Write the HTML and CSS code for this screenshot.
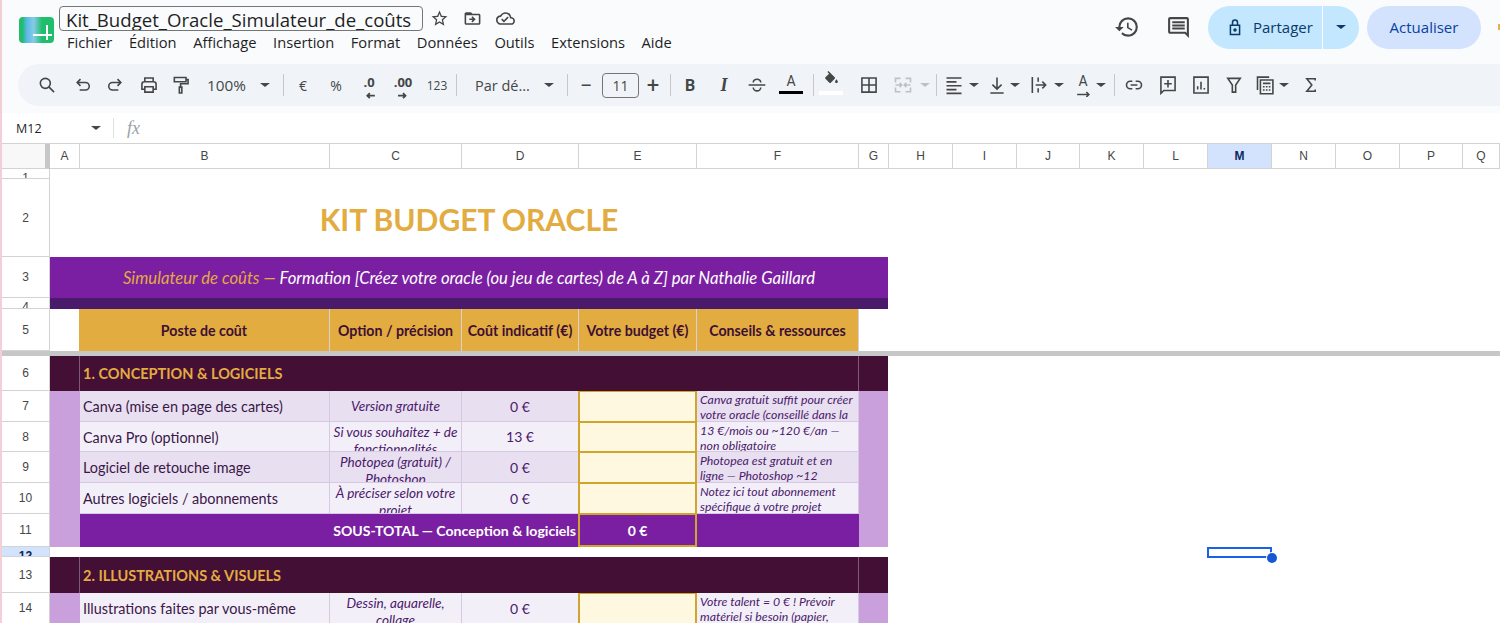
FILE: index.html
```html
<!DOCTYPE html>
<html lang="fr">
<head>
<meta charset="utf-8">
<title>Kit_Budget_Oracle_Simulateur_de_coûts</title>
<link rel="stylesheet" href="styles.css">
</head>
<body>
<header class="top">
  <div class="logo"><i class="logo-h"></i><i class="logo-v"></i></div>
  <div class="doc">
    <div class="title-row">
      <div class="title">Kit_Budget_Oracle_Simulateur_de_coûts</div>
      <svg class="ti" viewBox="0 0 24 24"><path d="M22 9.24l-7.19-.62L12 2 9.19 8.63 2 9.24l5.46 4.73L5.82 21 12 17.27 18.18 21l-1.63-7.03L22 9.24zM12 15.4l-3.76 2.27 1-4.28-3.32-2.88 4.38-.38L12 6.1l1.71 4.04 4.38.38-3.32 2.88 1 4.28L12 15.4z"/></svg>
      <svg class="ti" viewBox="0 0 24 24"><path d="M20 6h-8l-2-2H4c-1.1 0-1.99.9-1.99 2L2 18c0 1.1.9 2 2 2h16c1.1 0 2-.9 2-2V8c0-1.1-.9-2-2-2zm0 12H4V8h16v10zm-8.01-9l-1.41 1.41L12.16 12H8v2h4.16l-1.59 1.59L11.99 17 16 13.01 11.99 9z"/></svg>
      <svg class="ti" viewBox="0 0 24 24"><path d="M19.35 10.04A7.49 7.49 0 0 0 12 4C9.11 4 6.6 5.64 5.35 8.04A5.994 5.994 0 0 0 0 14c0 3.31 2.69 6 6 6h13c2.76 0 5-2.24 5-5 0-2.64-2.05-4.78-4.65-4.96zM19 18H6c-2.21 0-4-1.79-4-4 0-2.05 1.53-3.76 3.56-3.97l1.07-.11.5-.95A5.469 5.469 0 0 1 12 6c2.62 0 4.88 1.86 5.39 4.43l.3 1.5 1.53.11A2.98 2.98 0 0 1 22 15c0 1.65-1.35 3-3 3zm-9-3.82l-2.09-2.09L6.5 13.5 10 17l6.01-6.01-1.41-1.41z"/></svg>
    </div>
    <nav class="menu">
      <span>Fichier</span><span>Édition</span><span>Affichage</span><span>Insertion</span><span>Format</span><span>Données</span><span>Outils</span><span>Extensions</span><span>Aide</span>
    </nav>
  </div>
  <div class="actions">
    <svg class="big" viewBox="0 0 24 24"><path d="M13 3a9 9 0 0 0-9 9H1l3.89 3.89.07.14L9 12H6c0-3.87 3.13-7 7-7s7 3.13 7 7-3.13 7-7 7c-1.93 0-3.68-.79-4.94-2.06l-1.42 1.42A8.954 8.954 0 0 0 13 21a9 9 0 0 0 0-18zm-1 5v5l4.28 2.54.72-1.21-3.5-2.08V8H12z"/></svg>
    <svg class="big cm" viewBox="0 0 24 24"><path d="M21.99 4c0-1.1-.89-2-1.99-2H4c-1.1 0-2 .9-2 2v12c0 1.1.9 2 2 2h14l4 4-.01-18zM20 4v13.17L18.83 16H4V4h16zM6 12h12v2H6zm0-3h12v2H6zm0-3h12v2H6z"/></svg>
    <div class="share">
      <div class="share-main">
        <svg class="lock" viewBox="0 0 24 24"><path d="M6.5 10h11v11h-11z M9 10V6.5a3 3 0 0 1 6 0V10"/><circle cx="12" cy="15.5" r="1.2"/></svg>
        <span>Partager</span>
      </div>
      <div class="share-more"><i class="caret navy"></i></div>
    </div>
    <div class="update">Actualiser</div>
    <i class="avatar"></i>
  </div>
</header>

<div class="toolbar">
  <div class="t m17"><svg viewBox="0 0 24 24"><circle class="s" cx="10" cy="10" r="6"/><path class="s" d="M14.5 14.5 20.5 20.5"/></svg></div>
  <div class="t m12"><svg viewBox="0 0 24 24"><path class="s" d="M9 5 5 9l4 4M5 9h10a4.5 4.5 0 0 1 0 9H8"/></svg></div>
  <div class="t m8"><svg viewBox="0 0 24 24"><path class="s" d="M15 5l4 4-4 4M19 9H9a4.5 4.5 0 0 0 0 9h7"/></svg></div>
  <div class="t m10"><svg viewBox="0 0 24 24"><path class="s" d="M7 8V3.5h10V8M7 17H3.500v-6a3 3 0 0 1 3-3h11a3 3 0 0 1 3 3v6H17M7 14h10v6.500H7z"/></svg></div>
  <div class="t m8"><svg viewBox="0 0 24 24"><path class="s" d="M4 3h14v5H4zM18 5.500h2.500v5H11.500v4M10 14.500h3v7h-3z"/></svg></div>
  <div class="tt zoomv m14">100%</div>
  <i class="caret m11"></i>
  <i class="sep m13"></i>
  <div class="t txt m7">€</div>
  <div class="t txt m9">%</div>
  <div class="t dec m9"><span>.0</span><svg viewBox="0 0 24 24"><path class="s" d="M19 20H10M13 17l-3 3 3 3"/></svg></div>
  <div class="t dec m10"><span>.00</span><svg viewBox="0 0 24 24"><path class="s" d="M6 20h9M12 17l3 3-3 3"/></svg></div>
  <div class="t num m10">123</div>
  <i class="sep m7"></i>
  <div class="tt fontn m18">Par dé...</div>
  <i class="caret m13"></i>
  <i class="sep m13"></i>
  <div class="t pm m6">−</div>
  <div class="size m4">11</div>
  <div class="t pm m2">+</div>
  <i class="sep m5"></i>
  <div class="t bold m7">B</div>
  <div class="t ital m10">I</div>
  <div class="t m9"><svg viewBox="0 0 24 24"><path class="s" d="M2 12h20M7.500 9a4.500 4 0 0 1 9 0M7.500 15a4.500 4 0 0 0 9 0"/></svg></div>
  <div class="t colr m10"><span>A</span><i class="bar black"></i></div>
  <i class="sep m10"></i>
  <div class="t colr m5"><svg class="bucket" viewBox="0 0 24 24"><path d="M16.560 8.940 7.620 0 6.210 1.410l2.380 2.380-5.150 5.150a1.490 1.490 0 0 0 0 2.120l5.500 5.500c.29.29.68.44 1.060.44s.77-.15 1.060-.44l5.500-5.500c.59-.58.59-1.530 0-2.120zM19 11.500s-2 2.170-2 3.500c0 1.100.9 2 2 2s2-.9 2-2c0-1.330-2-3.500-2-3.500z"/></svg><i class="bar white"></i></div>
  <div class="t m14"><svg viewBox="0 0 24 24"><path class="s" d="M3.500 3.500h17v17h-17zM12 3.500v17M3.500 12h17"/></svg></div>
  <div class="t off m10"><svg viewBox="0 0 24 24"><path class="s" d="M3 9V4h6M15 4h6v5M3 15v5h6M15 20h6v-5M3 12h7M8 9.500l2.500 2.500L8 14.500M21 12h-7M16 9.500 13.500 12l2.500 2.500"/></svg></div>
  <i class="caret pale m5"></i>
  <i class="sep m6"></i>
  <div class="t m5"><svg viewBox="0 0 24 24"><path class="s" d="M3 3.500h18M3 8.200h12M3 12.800h18M3 17.500h12M3 22h18"/></svg></div>
  <i class="caret m3"></i>
  <div class="t m6"><svg viewBox="0 0 24 24"><path class="s" d="M12 3v14M6.500 11.500 12 17l5.500-5.500M4 21.500h16"/></svg></div>
  <i class="caret m1"></i>
  <div class="t m7"><svg viewBox="0 0 24 24"><path class="s" d="M4 2.500v19M11 3v5M11 16v5M8 12h12M16 8l4 4-4 4"/></svg></div>
  <i class="caret m3"></i>
  <div class="t rot m7"><span>A</span><svg viewBox="0 0 24 24"><path class="s" d="M5 21h14M16 18l3 3-3 3"/></svg></div>
  <i class="caret m1"></i>
  <i class="sep m8"></i>
  <div class="t m7"><svg viewBox="0 0 24 24"><path class="s" d="M10 7.500H7.500a4.500 4.500 0 0 0 0 9H10M14 7.500h2.500a4.500 4.500 0 0 1 0 9H14M8 12h8"/></svg></div>
  <div class="t m10"><svg viewBox="0 0 24 24"><path class="s" d="M3.500 2.500h17v16H7L3.500 22zM12 6v9M7.500 10.500h9"/></svg></div>
  <div class="t m9"><svg viewBox="0 0 24 24"><path class="s" d="M3.500 2.500h17v19h-17zM8 17.500v-4M12 17.500V8M16 17.500v-2"/></svg></div>
  <div class="t m9"><svg viewBox="0 0 24 24"><path class="s" d="M4.500 4h15l-5.500 8v8.500h-4V12z"/></svg></div>
  <div class="t m7"><svg viewBox="0 0 24 24"><path class="s" d="M3 18V2.500h14M6.500 6h15v16.500h-15zM9.500 10h9M9.500 14h2M13 14h2M16.500 14h2M9.500 18h2M13 18h2M16.500 18h2"/></svg></div>
  <i class="caret m2"></i>
  <div class="t m10"><svg viewBox="0 0 24 24"><path class="s" d="M17 6.500V4.500H7l6 7.500-6 7.500h10v-2"/></svg></div>
</div>

<div class="fbar">
  <div class="namebox">M12</div>
  <i class="caret"></i>
  <i class="fsep"></i>
  <div class="fx">fx</div>
</div>

<main class="sheet">
  <div class="corner"></div>
  <div class="ch">A</div><div class="ch">B</div><div class="ch">C</div><div class="ch">D</div><div class="ch">E</div><div class="ch">F</div><div class="ch">G</div><div class="ch">H</div><div class="ch">I</div><div class="ch">J</div><div class="ch">K</div><div class="ch">L</div><div class="ch on">M</div><div class="ch">N</div><div class="ch">O</div><div class="ch">P</div><div class="ch">Q</div>

  <div class="rh tiny">1</div>

  <div class="rh">2</div>
  <h1 class="wide bigtitle">KIT BUDGET ORACLE</h1>

  <div class="rh">3</div>
  <div class="wide subtitle"><span class="gold">Simulateur de coûts — </span>Formation [Créez votre oracle (ou jeu de cartes) de A à Z] par Nathalie Gaillard</div>

  <div class="rh tiny">4</div>
  <div class="wide strip"></div>

  <div class="rh">5</div>
  <div class="blank"></div>
  <div class="th">Poste de coût</div>
  <div class="th">Option / précision</div>
  <div class="th">Coût indicatif (€)</div>
  <div class="th">Votre budget (€)</div>
  <div class="th">Conseils &amp; ressources</div>
  <div class="blank"></div>

  <div class="freeze"></div>

  <div class="rh">6</div>
  <div class="band"></div>
  <div class="section">1. CONCEPTION &amp; LOGICIELS</div>
  <div class="band last"></div>

  <div class="rh">7</div>
  <div class="side five"></div>
  <div class="name alt">Canva (mise en page des cartes)</div>
  <div class="opt alt">Version gratuite</div>
  <div class="cost alt">0 €</div>
  <div class="input"></div>
  <div class="tip alt">Canva gratuit suffit pour créer<br>votre oracle (conseillé dans la</div>
  <div class="side five last"></div>

  <div class="rh">8</div>
  <div class="name">Canva Pro (optionnel)</div>
  <div class="opt two">Si vous souhaitez + de<br>fonctionnalités</div>
  <div class="cost">13 €</div>
  <div class="input"></div>
  <div class="tip">13 €/mois ou ~120 €/an —<br>non obligatoire</div>

  <div class="rh">9</div>
  <div class="name alt">Logiciel de retouche image</div>
  <div class="opt two alt">Photopea (gratuit) /<br>Photoshop</div>
  <div class="cost alt">0 €</div>
  <div class="input"></div>
  <div class="tip alt">Photopea est gratuit et en<br>ligne — Photoshop ~12</div>

  <div class="rh">10</div>
  <div class="name">Autres logiciels / abonnements</div>
  <div class="opt two">À préciser selon votre<br>projet</div>
  <div class="cost">0 €</div>
  <div class="input"></div>
  <div class="tip">Notez ici tout abonnement<br>spécifique à votre projet</div>

  <div class="rh">11</div>
  <div class="subtotal">SOUS-TOTAL — Conception &amp; logiciels</div>
  <div class="subvalue">0 €</div>
  <div class="subrest"></div>

  <div class="rh tiny on">12</div>
  <div class="selection"><i class="handle"></i></div>

  <div class="rh">13</div>
  <div class="band"></div>
  <div class="section">2. ILLUSTRATIONS &amp; VISUELS</div>
  <div class="band last"></div>

  <div class="rh">14</div>
  <div class="side"></div>
  <div class="name">Illustrations faites par vous-même</div>
  <div class="opt two">Dessin, aquarelle,<br>collage</div>
  <div class="cost">0 €</div>
  <div class="input"></div>
  <div class="tip">Votre talent = 0 € ! Prévoir<br>matériel si besoin (papier,</div>
  <div class="side last"></div>
</main>
</body>
</html>
```
FILE: styles.css
```css
* { box-sizing: border-box; }
html, body { margin: 0; height: 623px; overflow: hidden; }
body {
  background: #f9fbfd;
  border-left: 2px solid #f3d0d8;
  font-family: "Open Sans", Roboto, sans-serif;
  color: #1f1f1f;
}
i { display: block; font-style: normal; }

/* top bar */
.top { display: flex; height: 64px; }
.logo {
  position: relative;
  width: 35px; height: 26px;
  margin: 17px 5px 0 17px;
  border-radius: 4px;
  background: linear-gradient(90deg, #1fbd6c 0, #1fbd6c 10%, #5bb8e8 22%, #86cbe6 42%, #1fbd6c 66%, #1fbd6c 100%);
}
.logo-h { position: absolute; left: 14px; top: 17px; width: 19px; height: 2px; background: #fff; }
.logo-v { position: absolute; left: 27px; top: 8px; width: 2px; height: 15px; background: #fff; }
.doc { width: 640px; padding-top: 6px; }
.title-row { display: flex; align-items: center; }
.title {
  width: 364px; height: 25px;
  padding: 0 6px;
  border: 1px solid #747775;
  border-radius: 4px;
  font-size: 18.600px;
  line-height: 25px;
  white-space: nowrap;
  overflow: hidden;
}
.ti { width: 19px; height: 19px; fill: #444746; margin-left: 14px; }
.ti:nth-child(2) { margin-left: 7px; }
.menu { display: flex; gap: 16.600px; padding: 2px 0 0 8px; font-size: 14.700px; line-height: 19px; }
.actions { margin-left: auto; display: flex; align-items: center; height: 42px; margin-top: 6px; }
.big { width: 26px; height: 26px; fill: #444746; }
.cm { width: 25px; height: 25px; margin: 0 17px 0 26px; }
.share { display: flex; width: 151px; height: 43px; border-radius: 22px; background: #c2e7ff; font-size: 15px; color: #0a3a68; }
.share-main { display: flex; align-items: center; gap: 8px; width: 115px; padding-left: 17px; border-right: 1px solid #f9fbfd; }
.share-more { flex: 1; display: flex; align-items: center; justify-content: center; }
.lock { width: 20px; height: 20px; fill: #0a3a68; stroke: #0a3a68; stroke-width: 1.800; fill-rule: evenodd; }
.lock path { fill: none; }
.update { display: flex; align-items: center; justify-content: center; width: 114px; height: 43px; margin-left: 8px; border-radius: 22px; background: #d3e3fd; font-size: 15px; color: #0842a0; }
.avatar { width: 2px; height: 6px; margin-left: 17px; background: #e8b04a; }

/* toolbar */
.toolbar {
  display: flex; align-items: center;
  height: 42px;
  margin-left: 16px;
  border-radius: 21px 0 0 21px;
  background: #f0f4f9;
  color: #444746;
  font-size: 14px;
}
.t { position: relative; flex: none; width: 24px; height: 24px; display: flex; align-items: center; justify-content: center; }
.t svg { width: 20px; height: 20px; }
.s { fill: none; stroke: #444746; stroke-width: 1.900; }
.tt { flex: none; white-space: nowrap; }
.zoomv { width: 42px; font-size: 15.300px; }
.fontn { width: 56px; font-size: 14.500px; }
.caret {
  flex: none;
  box-sizing: content-box;
  width: 0; height: 0;
  border-style: solid;
  border-color: #444746 transparent transparent;
  border-width: 4px 5px 0;
}
.caret.pale { border-top-color: #bdc1c6; }
.caret.navy { border-top-color: #0a3a68; }
.sep { flex: none; width: 1px; height: 22px; background: #c7c7c7; }
.txt { font-size: 14px; }
.num { font-size: 12px; }
.dec { font-size: 13px; font-weight: 700; align-items: flex-start; }
.dec span { line-height: 18px; }
.dec svg { position: absolute; left: 2px; top: 6px; }
.dec .s { stroke-width: 2.2; }
.pm { font-size: 22px; font-weight: 400; font-family: Roboto, sans-serif; }
.size { flex: none; width: 37px; height: 25px; border: 1px solid #747775; border-radius: 4px; text-align: center; font-size: 14px; line-height: 23px; }
.bold { font-size: 16px; font-weight: 700; font-family: Roboto, sans-serif; }
.ital { font: italic 700 18px "Liberation Serif", serif; }
.colr { display: block; text-align: center; font-size: 13px; font-family: Roboto, sans-serif; line-height: 15px; }
.colr span { display: block; height: 16px; padding-top: 1px; font-size: 14px; }
.bar { position: absolute; left: 0; top: 18px; width: 24px; height: 3px; }
.black { background: #000; }
.white { background: #fff; height: 4px; }
.bucket { position: absolute; left: 4px; top: -3px; width: 17px !important; height: 19px !important; fill: #444746; }
.off .s { stroke: #bdc1c6; }
.rot { font-size: 14px; align-items: flex-start; font-family: Roboto, sans-serif; }
.rot span { line-height: 17px; }
.rot svg { position: absolute; left: 2px; top: 4px; }

.m1 { margin-left: 1px; } .m2 { margin-left: 2px; } .m3 { margin-left: 3px; } .m4 { margin-left: 4px; }
.m5 { margin-left: 5px; } .m6 { margin-left: 6px; } .m7 { margin-left: 7px; } .m8 { margin-left: 8px; }
.m9 { margin-left: 9px; } .m10 { margin-left: 10px; } .m11 { margin-left: 11px; } .m12 { margin-left: 12px; }
.m13 { margin-left: 13px; } .m14 { margin-left: 14px; } .m17 { margin-left: 17px; } .m18 { margin-left: 18px; }

/* formula bar */
.fbar {
  display: flex; align-items: center;
  height: 31px;
  margin-top: 7px;
  background: #fff;
  border-bottom: 1px solid #d3d3d3;
  font-size: 12.500px;
}
.namebox { width: 89px; padding-left: 14px; }
.fsep { width: 1px; height: 20px; margin-left: 12px; background: #e0e0e0; }
.fx { margin-left: 13px; font: italic 18px "Liberation Serif", serif; color: #9aa0a6; }

/* sheet */
.sheet {
  display: grid;
  grid-template-columns: 48px 30px 250px 132px 117px 118px 162px 30px 64px 64px 63px 64px 64px 64px 64px 64px 63px 37px;
  grid-template-rows: 25px 10px 78px 41px 11px 42px 5px 35px 31px 30px 31px 31px 33px 10px 36px 31px;
  background: #fff;
  font-family: Lato, "Open Sans", sans-serif;
}
.corner { background: #f8f8f8; border-right: 5px solid #c7c7c7; border-bottom: 1px solid #d3d3d3; }
.ch {
  display: flex; align-items: center; justify-content: center;
  border-right: 1px solid #d3d3d3; border-bottom: 1px solid #d3d3d3;
  font: 12px "Liberation Sans", sans-serif; color: #444746;
}
.ch.on { background: #d3e3fd; font-weight: 700; color: #0b2a5b; }
.rh {
  grid-column: 1;
  display: flex; align-items: center; justify-content: center;
  border-right: 1px solid #d3d3d3; border-bottom: 1px solid #d3d3d3;
  background: #fff;
  overflow: hidden;
  font: 12px "Liberation Sans", sans-serif; color: #444746;
}
.rh.tiny { align-items: flex-start; line-height: 14px; padding-top: 2px; }
.rh.on { background: #d3e3fd; font-weight: 700; color: #0b2a5b; }

.wide { grid-column: span 7; display: flex; align-items: center; justify-content: center; margin: 0 1px 0 0; }
.bigtitle { padding-top: 2px; font-size: 30px; font-weight: 700; color: #e2ac40; }
.subtitle { background: #7b1fa2; color: #fff; font-size: 16.700px; font-style: italic; white-space: pre-wrap; }
.gold { color: #e2ac40; }
.strip { background: #4a1a6b; }
.blank { background: #fff; }
.blank + .th { margin-left: -1px; }
.th {
  display: flex; align-items: center; justify-content: center;
  background: #e2ac40; color: #3f0f33;
  border-right: 1px solid #d9cfd9;
  font-size: 14.200px; font-weight: 700; white-space: nowrap;
}
.freeze { grid-column: 1 / -1; background: #c7c7c7; }
.band { background: #430f35; }
.last { margin-right: 1px; }
.section {
  grid-column: span 5;
  display: flex; align-items: center;
  margin-left: -1px;
  padding-left: 3px;
  background: #430f35; color: #e2ac40;
  border-left: 1px solid #7d5a78;
  border-right: 1px solid #7d5a78;
  font-size: 14.500px; font-weight: 700;
}
.side { background: #c9a0dc; }
.five { grid-row: span 5; }
.name, .opt, .cost, .tip {
  background: #f3eff8;
  border-right: 1px solid #d7c8e4; border-bottom: 1px solid #d7c8e4;
  overflow: hidden;
  color: #3a1748;
}
.alt { background: #e8dff0; }
.name { display: flex; align-items: center; padding: 1px 0 0 3px; font-size: 14.400px; white-space: nowrap; }
.opt { display: flex; align-items: center; justify-content: center; text-align: center; font-size: 13.600px; font-style: italic; line-height: 17px; color: #4a1a6b; white-space: nowrap; }
.opt.two { align-items: flex-start; padding-top: 2px; }
.cost { display: flex; align-items: center; justify-content: center; font-size: 14px; color: #4a1a6b; }
.input { margin-left: -1px; background: #fff8e1; border: 1px solid #cfa52c; border-width: 1px 2px; }
.tip { padding: 1px 0 0 3px; font-size: 12.300px; font-style: italic; line-height: 15px; color: #4a1a6b; white-space: nowrap; }
.subtotal {
  grid-column: span 3;
  display: flex; align-items: center; justify-content: flex-end;
  padding-right: 3px;
  background: #7b1fa2; color: #fff;
  font-size: 14.100px; font-weight: 700; white-space: nowrap;
}
.subvalue {
  display: flex; align-items: center; justify-content: center;
  margin-left: -1px;
  background: #7b1fa2; color: #fff;
  border: 2px solid #cfa52c; border-top-width: 1px;
  font-size: 14px; font-weight: 700;
}
.subrest { background: #7b1fa2; }
.selection { grid-column: 14; position: relative; margin: 0 0 -1px -1px; border: 2px solid #1a62e3; }
.handle { position: absolute; right: -7px; bottom: -7px; width: 10px; height: 10px; border-radius: 50%; background: #1558d6; box-shadow: 0 0 0 1px #fff; }
```
